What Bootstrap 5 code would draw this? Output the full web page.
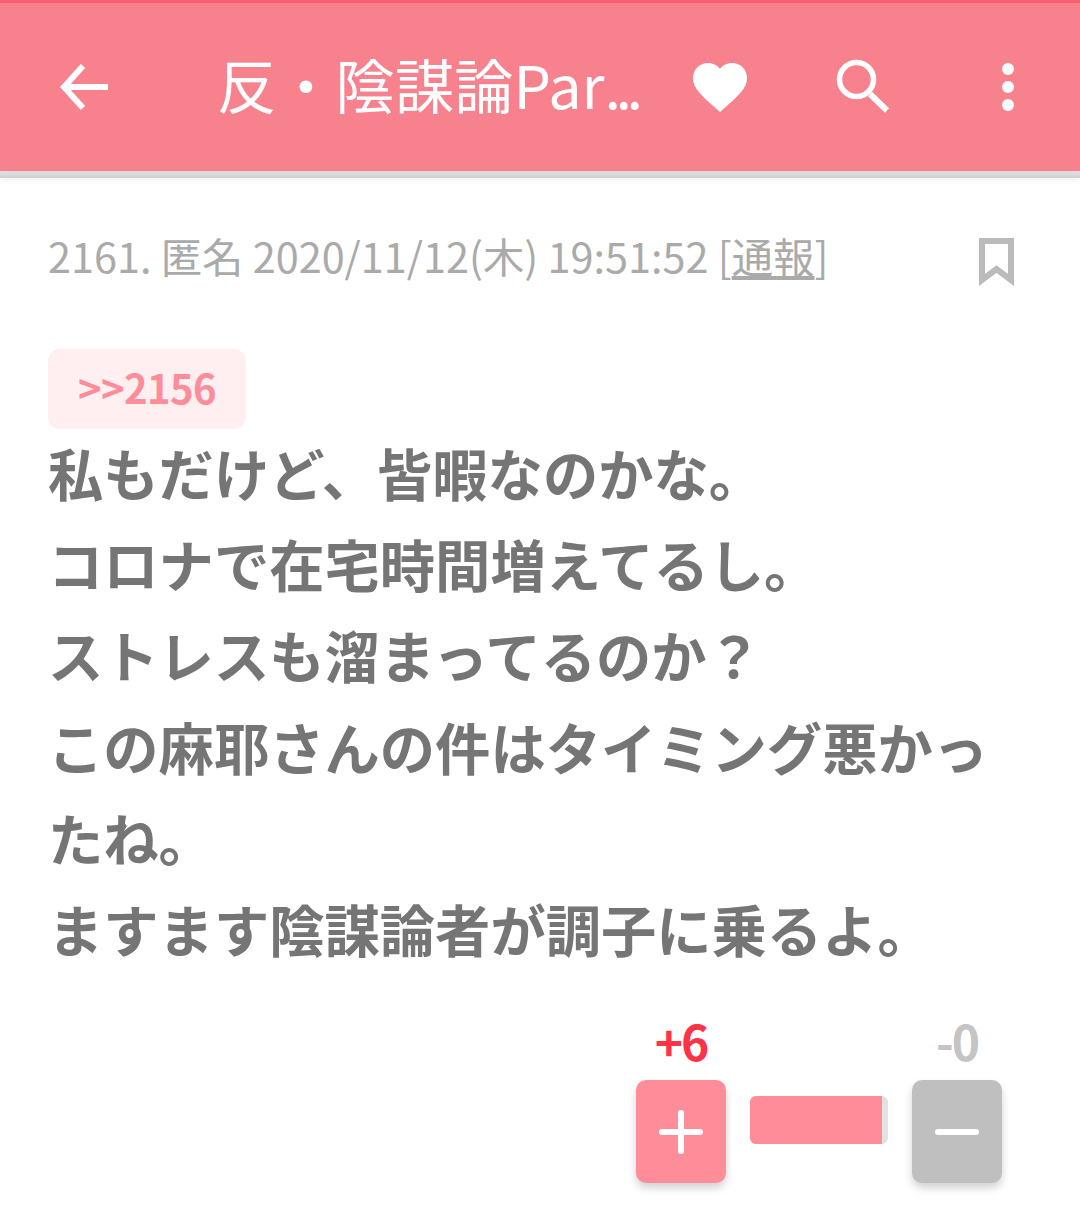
<!DOCTYPE html>
<html lang="ja">
<head>
<meta charset="UTF-8">
<title>反・陰謀論Part</title>
<link href="https://cdn.jsdelivr.net/npm/bootstrap@5.3.0/dist/css/bootstrap.min.css" rel="stylesheet">
<style>
body { font-family: "Noto Sans CJK JP", "Liberation Sans", sans-serif; background: #fff; height: 1225px; overflow: hidden; }
.app-bar { height: 171px; background: #f8818e; border-top: 3px solid #f46072; padding-left: 59px; }
.bar-shade { height: 7px; background: linear-gradient(#dcdcdc 40%, #cecece); box-shadow: 0 3px 6px rgba(0,0,0,.05); }
.back-btn { width: 51px; }
.bar-title { width: 425px; margin-left: 107px; padding-bottom: 6px; font-size: 59.3px; line-height: 1; color: #fff; white-space: nowrap; }
.title-dots { letter-spacing: -5.5px; }
.bar-icon { width: 56px; height: 56px; }
.post-wrap { padding: 47px 65px 0 48px; }
.meta-line { font-size: 41.4px; line-height: 60px; color: #aaa; }
.meta-line a { color: #aaa; }
.mark-icon { width: 38px; height: 48px; margin-top: 13px; }
.reply-chip { width: 198px; height: 80px; margin-top: 63px; padding-bottom: 4px; background: #ffeff1; color: #ff8c99; border-radius: 12px; font-size: 40px; letter-spacing: -.6px; font-weight: 700; text-decoration: none; }
.post-body { width: 950px; margin-top: -2px; font-size: 55.3px; line-height: 91.2px; font-weight: 700; color: #757575; }
.vote-area { margin-top: 44px; margin-right: 13px; width: 366px; }
.vote-col { width: 90px; }
.vote-num { height: 62px; font-size: 48px; line-height: 44px; font-weight: 700; letter-spacing: -2px; }
.num-plus { color: #ff3347; }
.num-minus { color: #c4c4c4; }
.vote-btn { width: 90px; height: 103px; border: 0; border-radius: 10px; padding: 0; box-shadow: 0 5px 8px rgba(0,0,0,.18); }
.btn-plus { background: #ff8c99; }
.btn-minus { background: #bfbfbf; }
.ratio-bar { width: 138px; height: 48px; margin: 78px 24px 0; background: #e2e2e2; border-radius: 6px; overflow: hidden; }
.ratio-fill { height: 100%; background: #ff8c99; }
</style>
</head>
<body>
<header>
  <div class="app-bar d-flex align-items-center">
    <svg class="back-btn" viewBox="0 0 51 52" fill="none" stroke="#fff" stroke-width="6"><path d="M49 26H6M24 5 5 26l19 21"/></svg>
    <div class="bar-title">反・陰謀論Par<span class="title-dots">...</span></div>
    <svg class="bar-icon" style="margin-left:50px" viewBox="0 0 56 56" fill="#fff"><path d="M28 53l-4-3.6C10 37 1 29.5 1 19 1 10.5 7.5 4 16 4c4.800 0 9.300 2.200 12 5.800C30.700 6.200 35.200 4 40 4c8.500 0 15 6.500 15 15 0 10.500-9 18-23 30.400z"/></svg>
    <svg class="bar-icon" style="margin-left:87px" viewBox="0 0 56 56" fill="none" stroke="#fff"><circle cx="21.500" cy="20.500" r="17" stroke-width="5.500"/><path d="m35 35 17 16.500" stroke-width="6"/></svg>
    <svg class="bar-icon" style="margin-left:89px" viewBox="0 0 56 56" fill="#fff"><circle cx="28" cy="10" r="6"/><circle cx="28" cy="28" r="6"/><circle cx="28" cy="46" r="6"/></svg>
  </div>
  <div class="bar-shade"></div>
</header>

<main class="post-wrap">
  <div class="d-flex justify-content-between align-items-start">
    <div class="meta-line">2161. 匿名 2020/11/12(木) 19:51:52 [<a href="#">通報</a>]</div>
    <svg class="mark-icon" viewBox="0 0 38 48" fill="none" stroke="#bbb" stroke-width="6"><path d="M5 3h29v39L19.500 31 5 42z"/></svg>
  </div>
  <a href="#" class="reply-chip d-flex align-items-center justify-content-center">&gt;&gt;2156</a>
  <div class="post-body">私もだけど、皆暇なのかな。<br>コロナで在宅時間増えてるし。<br>ストレスも溜まってるのか？<br>この麻耶さんの件はタイミング悪かったね。<br>ますます陰謀論者が調子に乗るよ。</div>
  <div class="vote-area d-flex ms-auto">
    <div class="vote-col text-center">
      <div class="vote-num num-plus">+6</div>
      <button type="button" class="vote-btn btn-plus d-flex align-items-center justify-content-center">
        <svg width="44" height="44" viewBox="0 0 44 44" stroke="#fff" stroke-width="6" stroke-linecap="round"><path d="M22 3v38M3 22h38"/></svg>
      </button>
    </div>
    <div class="ratio-bar"><div class="ratio-fill" style="width:96%"></div></div>
    <div class="vote-col text-center">
      <div class="vote-num num-minus">-0</div>
      <button type="button" class="vote-btn btn-minus d-flex align-items-center justify-content-center">
        <svg width="44" height="44" viewBox="0 0 44 44" stroke="#fff" stroke-width="6" stroke-linecap="round"><path d="M3 22h38"/></svg>
      </button>
    </div>
  </div>
</main>
<script src="https://cdn.jsdelivr.net/npm/bootstrap@5.3.0/dist/js/bootstrap.bundle.min.js"></script>
</body>
</html>
